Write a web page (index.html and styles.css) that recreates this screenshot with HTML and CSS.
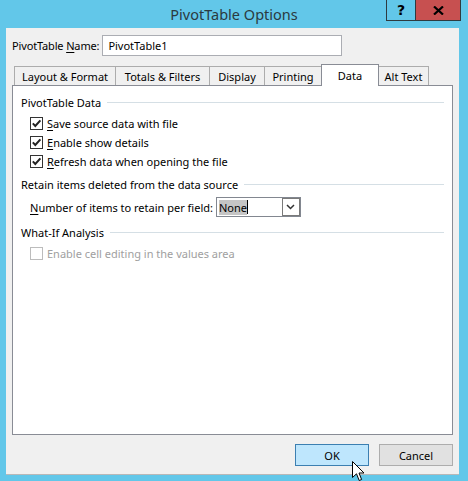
FILE: index.html
```html
<!DOCTYPE html>
<html>
<head>
<meta charset="utf-8">
<link rel="stylesheet" href="styles.css">
</head>
<body>
<div class="window">
  <div class="titlebar">
    <div class="spacer"></div>
    <div class="title">PivotTable Options</div>
    <div class="caption-btns">
      <div class="cbtn help">?</div>
      <div class="cbtn close">
        <svg width="11" height="9" viewBox="0 0 11 9"><path d="M1 0.5 L10 8.5 M10 0.5 L1 8.5" stroke="#000" stroke-width="2.2"/></svg>
      </div>
    </div>
  </div>
  <div class="client">
    <div class="name-row">
      <span class="label">PivotTable <u>N</u>ame:</span>
      <div class="textbox">PivotTable1</div>
    </div>
    <div class="tabs">
      <div class="tab t1">Layout &amp; Format</div>
      <div class="tab t2">Totals &amp; Filters</div>
      <div class="tab t3">Display</div>
      <div class="tab t4">Printing</div>
      <div class="tab t5 active">Data</div>
      <div class="tab t6">Alt Text</div>
    </div>
    <div class="panel">
      <div class="group-head"><span>PivotTable Data</span><div class="rule"></div></div>
      <div class="checks first">
        <div class="check-row"><span class="box checked"><svg width="11" height="11" viewBox="0 0 11 11"><path d="M1.8 5.4 L4.3 8 L9.4 2.4" fill="none" stroke="#222" stroke-width="2"/></svg></span><span><u>S</u>ave source data with file</span></div>
        <div class="check-row"><span class="box checked"><svg width="11" height="11" viewBox="0 0 11 11"><path d="M1.8 5.4 L4.3 8 L9.4 2.4" fill="none" stroke="#222" stroke-width="2"/></svg></span><span><u>E</u>nable show details</span></div>
        <div class="check-row"><span class="box checked"><svg width="11" height="11" viewBox="0 0 11 11"><path d="M1.8 5.4 L4.3 8 L9.4 2.4" fill="none" stroke="#222" stroke-width="2"/></svg></span><span><u>R</u>efresh data when opening the file</span></div>
      </div>
      <div class="group-head"><span>Retain items deleted from the data source</span><div class="rule"></div></div>
      <div class="retain-row">
        <span><u>N</u>umber of items to retain per field:</span>
        <div class="combo">
          <div class="combo-text"><span class="sel">None</span><span class="caret"></span></div>
          <div class="combo-btn"><svg width="9" height="6" viewBox="0 0 9 6"><path d="M1 1 L4.5 4.5 L8 1" fill="none" stroke="#333" stroke-width="1.5"/></svg></div>
        </div>
      </div>
      <div class="group-head"><span>What-If Analysis</span><div class="rule"></div></div>
      <div class="checks last">
        <div class="check-row disabled"><span class="box"></span><span>Enable cell editing in the values area</span></div>
      </div>
    </div>
    <div class="buttons">
      <div class="btn ok">OK</div>
      <div class="btn">Cancel</div>
    </div>
  </div>
</div>
<svg class="cursor" width="13" height="21" viewBox="0 0 13 21"><path d="M0.5 0.5 L0.5 16.5 L4.5 12.8 L7.2 19.5 L9.6 18.5 L7 12 L12 12 Z" fill="#fff" stroke="#000" stroke-width="1"/></svg>
</body>
</html>
```
FILE: styles.css
```css
* { box-sizing: border-box; }
html, body { margin: 0; padding: 0; }
body {
  width: 468px;
  height: 481px;
  background: #62c7e9;
  font-family: "Noto Sans", sans-serif;
  font-size: 11px;
  color: #000;
  overflow: hidden;
  position: relative;
}
u { text-decoration: underline; text-underline-offset: 2px; }
.window { display: flex; flex-direction: column; height: 100%; }
.titlebar {
  height: 30px;
  display: grid;
  grid-template-columns: 1fr auto 1fr;
  align-items: start;
}
.title {
  font-size: 14.5px;
  color: #2b3a40;
  line-height: 28px;
}
.caption-btns {
  display: flex;
  justify-content: flex-end;
  margin-right: 7px;
}
.cbtn {
  height: 21px;
  border: 1px solid #2e3b40;
  border-top: none;
  display: flex;
  align-items: center;
  justify-content: center;
  font-weight: bold;
  font-size: 14px;
  font-family: "DejaVu Sans", sans-serif;
}
.help { width: 29px; border-right: none; }
.close { width: 46px; background: #c75050; }
.client {
  flex: 1;
  margin: 0 9px 7px 6px;
  background: #f0f0f0;
  padding: 7px 6px 8px 6px;
  display: flex;
  flex-direction: column;
  box-shadow: 0 1px 0 #b8b8b8;
}
.name-row { display: flex; align-items: center; gap: 3px; height: 21px; }
.label { letter-spacing: -0.15px; }
.textbox {
  width: 240px;
  height: 21px;
  background: #fff;
  border: 1px solid #abadb3;
  padding: 0 5px;
  line-height: 19px;
}
.tabs {
  display: flex;
  margin-top: 8px;
  padding-left: 2px;
  align-items: flex-end;
  height: 21px;
  position: relative;
  z-index: 1;
}
.tab {
  height: 19px;
  border: 1px solid #acacac;
  border-bottom: none;
  border-right: none;
  background: #f0f0f0;
  line-height: 20px;
  text-align: center;
}
.t1 { width: 101px; }
.t2 { width: 94px; }
.t3 { width: 55px; }
.t4 { width: 57px; }
.t5 { width: 58px; }
.t6 { width: 50px; }
.tab:last-child { border-right: 1px solid #acacac; }
.tab.active {
  height: 22px;
  background: #fff;
  border: 1px solid #898c95;
  border-bottom: none;
  margin-bottom: -1px;
  line-height: 21px;
}
.tab.active + .tab { border-left: none; }
.panel {
  height: 350px;
  background: #fff;
  border: 1px solid #898c95;
  padding: 7px 8px 0 8px;
  display: flex;
  flex-direction: column;
}
.group-head {
  display: flex;
  align-items: center;
  gap: 6px;
  height: 18px;
}
.rule { flex: 1; height: 1px; background: #d5dfe5; }
.checks { display: flex; flex-direction: column; padding: 3px 0 0 9px; }
.checks.first { margin-bottom: 4px; }
.check-row { display: flex; align-items: center; gap: 4px; height: 19px; }
.box {
  width: 13px;
  height: 13px;
  border: 1px solid #333;
  background: #fff;
  display: flex;
  align-items: center;
  justify-content: center;
}
.disabled { color: #a0a0a0; }
.disabled .box { border-color: #bcbcbc; }
.retain-row {
  display: flex;
  align-items: center;
  gap: 3px;
  padding-left: 9px;
  height: 26px;
  margin: 1px 0 3px 0;
}
.combo {
  width: 85px;
  height: 20px;
  border: 1px solid #828790;
  background: #fff;
  display: flex;
  align-items: center;
  padding: 1px;
}
.combo-text { flex: 1; display: flex; align-items: center; padding-left: 1px; height: 16px; }
.sel { background: #c5c5c5; line-height: 15px; }
.caret { width: 1px; height: 14px; background: #000; }
.combo-btn {
  width: 18px;
  height: 18px;
  border: 1px solid #7a7a7a;
  margin-right: -1px;
  display: flex;
  align-items: center;
  justify-content: center;
}
.buttons {
  display: flex;
  justify-content: flex-end;
  gap: 10px;
  margin-top: 9px;
}
.btn {
  width: 74px;
  height: 22px;
  border: 1px solid #adadad;
  background: #e1e1e1;
  display: flex;
  align-items: center;
  justify-content: center;
}
.btn.ok { background: #bee6fd; border-color: #3c7fb1; }
.cursor { position: absolute; left: 352px; top: 461px; }
```
